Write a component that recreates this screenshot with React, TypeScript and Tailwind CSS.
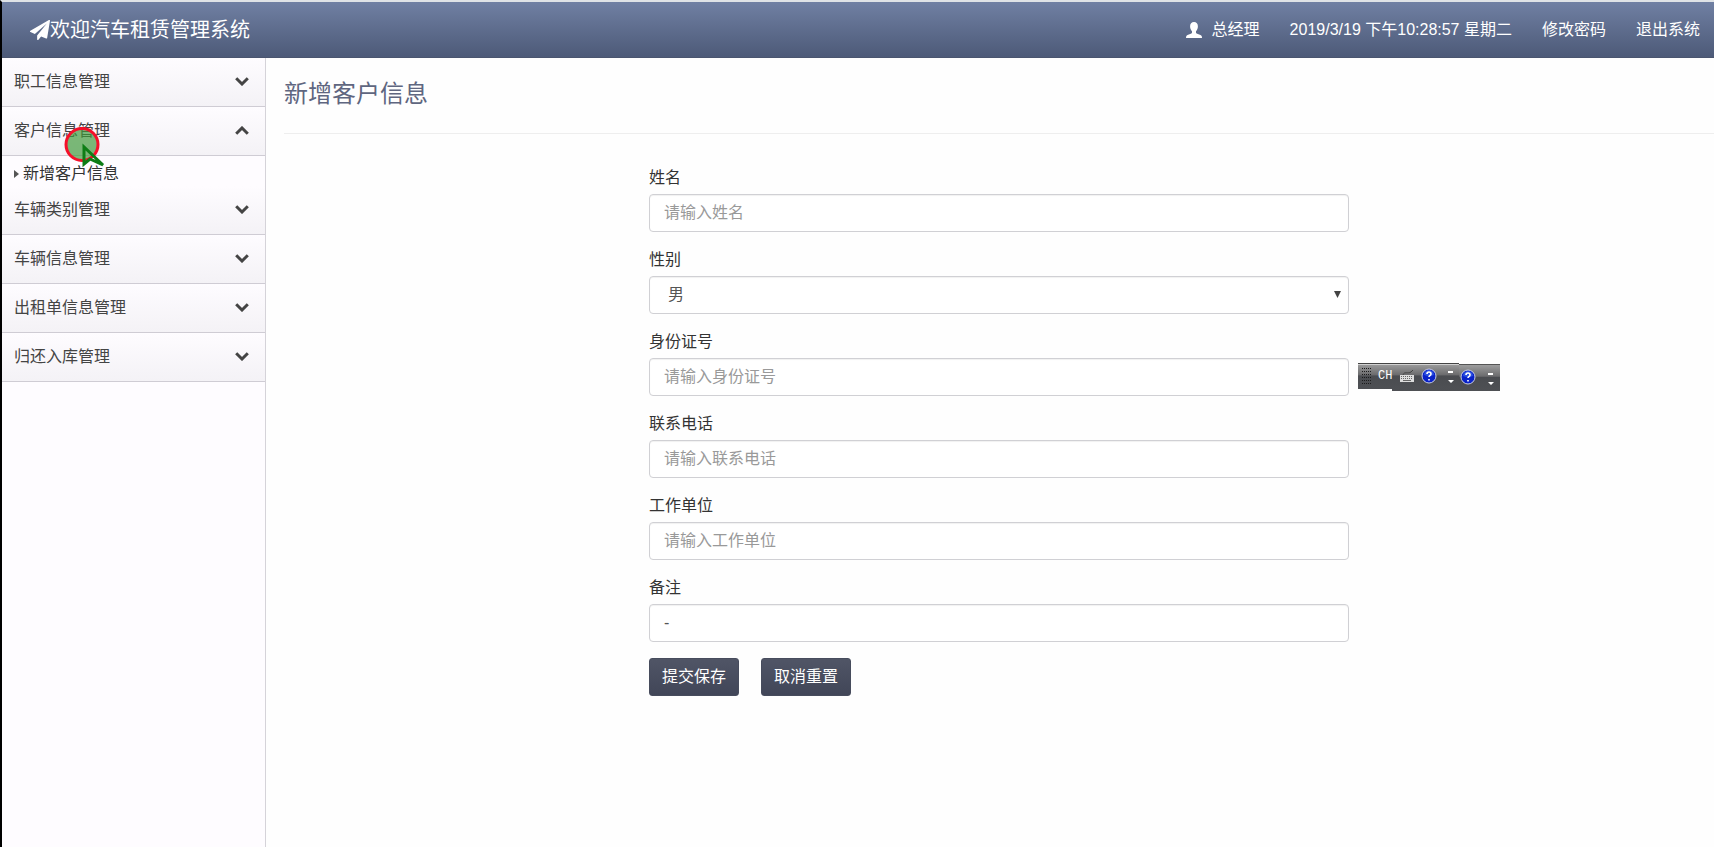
import React from "react";

type MenuItem = { title: string; children?: string[] };

const menu: MenuItem[] = [
  { title: "职工信息管理" },
  { title: "客户信息管理", children: ["新增客户信息"] },
  { title: "车辆类别管理" },
  { title: "车辆信息管理" },
  { title: "出租单信息管理" },
  { title: "归还入库管理" },
];

const controlClass =
  "block h-[38px] w-full rounded border border-[#d0d0d4] bg-white px-3.5 text-base text-[#555] shadow-[inset_0_1px_1px_rgba(0,0,0,0.06)] placeholder:text-[#999] focus:outline-none";
const buttonClass =
  "h-[38px] rounded-[3px] border border-[#474c5d] bg-linear-to-b from-[#505566] to-[#414658] px-3 text-base leading-none text-white";

function PlaneIcon() {
  return (
    <svg viewBox="0 0 1792 1792" className="h-5 w-5 fill-white" aria-hidden="true">
      <path d="M1764 11q33 24 27 64l-256 1536q-5 29-32 45-14 8-31 8-11 0-24-5l-453-185-242 295q-18 23-49 23-13 0-22-4-19-7-30.500-23.500t-11.500-36.500v-349l864-1059-1069 925-395-162q-37-14-40-55-2-40 32-59l1664-960q15-9 32-9 20 0 36 11z" />
    </svg>
  );
}

function UserIcon() {
  return (
    <svg viewBox="0 0 16 16" className="h-4 w-4 fill-white" aria-hidden="true">
      <path d="M8 0C5.500 0 4.100 1.700 4.100 4.200c0 2 .7 3.900 1.900 5v1.300c0 .7-.5 1-1.200 1.300L1.500 13C.5 13.500 0 14.300 0 16h16c0-1.700-.5-2.500-1.500-3L11.200 11.800c-.7-.3-1.200-.6-1.200-1.300V9.200c1.200-1.100 1.900-3 1.900-5C11.900 1.700 10.500 0 8 0z" />
    </svg>
  );
}

function Chevron({ open }: { open: boolean }) {
  return (
    <svg viewBox="0 0 14 9" className="mb-0.5 h-[9px] w-3.5 fill-none stroke-[#444] stroke-3" aria-hidden="true">
      <path d={open ? "M1.200 7.700 7 2l5.800 5.700" : "M1.200 1.300 7 7l5.800-5.700"} />
    </svg>
  );
}

function Field({ id, label, children }: { id: string; label: string; children: React.ReactNode }) {
  return (
    <div className="mb-[15px]">
      <label htmlFor={id} className="mb-1 block text-base leading-[25px] text-[#333]">
        {label}
      </label>
      {children}
    </div>
  );
}

function HelpGlyph({ x, y }: { x: number; y: number }) {
  return (
    <g>
      <circle cx={x} cy={y} r="7" fill="#0a22c8" stroke="#c8cce0" />
      <path d={`M${x - 5} ${y - 1}a5 5 0 0 1 10 0q-5 2-10 0z`} fill="#2c50e2" />
      <path
        d={`M${x - 2} ${y - 2}q0-2 2-2t2 2q0 1-1 1.500t-1 1.500M${x} ${y + 3}v1.500`}
        fill="none"
        stroke="#fff"
        strokeWidth="1.600"
      />
    </g>
  );
}

function LanguageBar() {
  return (
    <div className="absolute left-full top-0 z-10 ml-[9px] h-7 w-[142px]">
      <svg viewBox="0 0 142 28" className="h-7 w-[142px]" aria-hidden="true">
        <defs>
          <linearGradient id="bar" x2="0" y2="1">
            <stop offset="0" stopColor="#a2a2a2" />
            <stop offset="0.450" stopColor="#6c6c6e" />
            <stop offset="0.500" stopColor="#4a4c50" />
            <stop offset="1" stopColor="#4e5054" />
          </linearGradient>
        </defs>
        <path d="M34 1h108v27H34z" fill="url(#bar)" />
        <path d="M34 1.500h108" stroke="#555" />
        <path d="M0 0h101v26H0z" fill="url(#bar)" />
        <path d="M0 .5h101" stroke="#444" />
        <path d="M0 1.500h101" stroke="#d0d0d0" />
        <path
          d="M4 5.500h9M4 8.500h9M4 11.500h9M4 14.500h9M4 17.500h9M4 20.500h9"
          stroke="#1c1c1c"
          strokeDasharray="1 1"
        />
        <path d="M42 12h14v7H42z" fill="#ddd" />
        <path d="M43 13.500h12M43 15.500h12" stroke="#666" strokeDasharray="1 1" />
        <path d="M45 17.500h8" stroke="#666" />
        <path d="M45 12c1-4 5-1 8-3l2-2" fill="none" stroke="#444" />
        <HelpGlyph x={71} y={13} />
        <HelpGlyph x={110} y={14} />
        <path d="M90 8h5v2h-5zM90 17h6l-3 3zM130 10h5v2h-5zM130 19h6l-3 3z" fill="#fff" />
      </svg>
      <span className="absolute left-5 top-1.5 font-['Liberation_Mono',monospace] text-xs leading-[14px] text-white">
        CH
      </span>
    </div>
  );
}

function PointerMark() {
  return (
    <svg
      viewBox="0 0 44 42"
      className="pointer-events-none absolute left-[62px] top-5 z-10 h-[42px] w-11"
      aria-hidden="true"
    >
      <circle cx="18" cy="17.500" r="16" fill="#3e9a3a" fillOpacity="0.680" stroke="#f5102a" strokeWidth="3" />
      <path d="M20 20v17l6-5 13 6z" fill="none" stroke="#0d7d16" strokeWidth="3" />
    </svg>
  );
}

export default function App() {
  return (
    <div className="flex min-h-screen flex-col border-l-2 border-t-2 border-l-black border-t-[#dfe3e6] bg-[#fefefe] font-['Liberation_Sans','Noto_Sans_CJK_SC',sans-serif] text-[#333]">
      <header className="flex h-14 items-center justify-between border-b border-[#4a556f] bg-linear-to-b from-[#7080a3] to-[#4d5a78] pl-7 pr-3.5 text-white">
        <a href="#home" className="flex items-center text-xl leading-7">
          <PlaneIcon />
          欢迎汽车租赁管理系统
        </a>
        <nav className="flex items-center gap-[30px] text-base leading-6">
          <span className="flex items-center gap-2.5">
            <UserIcon />
            总经理
          </span>
          <time>2019/3/19 下午10:28:57 星期二</time>
          <a href="#password">修改密码</a>
          <a href="#logout">退出系统</a>
        </nav>
      </header>
      <div className="flex flex-1">
        <aside className="w-[264px] shrink-0 border-r border-[#d5d3d9] bg-[#fefcff]">
          {menu.map((item) => (
            <div key={item.title} className="relative">
              <button
                type="button"
                aria-expanded={!!item.children}
                className="flex h-[49px] w-full items-center justify-between border-b border-[#cfccd4] bg-linear-to-b from-[#fefcff] to-[#f4f2f6] pl-3 pr-4 text-base text-[#444]"
              >
                {item.title}
                <Chevron open={!!item.children} />
              </button>
              {item.children?.map((child) => (
                <a key={child} href="#new-customer" className="flex h-[30px] items-center gap-1 pl-3 pt-1.5 text-base leading-6 text-[#333]">
                  <svg viewBox="0 0 5 8" className="h-2 w-[5px] fill-[#555]" aria-hidden="true">
                    <path d="M0 0l5 4-5 4z" />
                  </svg>
                  {child}
                </a>
              ))}
              {item.children && <PointerMark />}
            </div>
          ))}
        </aside>
        <main className="min-w-0 flex-1 pl-[18px]">
          <h1 className="border-b border-[#eee] pb-[22px] pt-[18px] text-2xl leading-[35px] text-[#5f6680]">新增客户信息</h1>
          <form className="mx-auto max-w-[700px] pt-[31px]" onSubmit={(e) => e.preventDefault()}>
            <Field id="name" label="姓名">
              <input id="name" className={controlClass} placeholder="请输入姓名" />
            </Field>
            <Field id="gender" label="性别">
              <div className="relative">
                <select id="gender" className={`${controlClass} appearance-none pl-[18px]`}>
                  <option>男</option>
                  <option>女</option>
                </select>
                <svg viewBox="0 0 7 7" className="pointer-events-none absolute right-2 top-[15px] h-[7px] w-[7px] fill-[#444]" aria-hidden="true">
                  <path d="M0 0h7L3.500 7z" />
                </svg>
              </div>
            </Field>
            <Field id="idcard" label="身份证号">
              <div className="relative">
                <input id="idcard" className={controlClass} placeholder="请输入身份证号" />
                <div className="absolute right-0 top-[5px]">
                  <LanguageBar />
                </div>
              </div>
            </Field>
            <Field id="phone" label="联系电话">
              <input id="phone" className={controlClass} placeholder="请输入联系电话" />
            </Field>
            <Field id="company" label="工作单位">
              <input id="company" className={controlClass} placeholder="请输入工作单位" />
            </Field>
            <Field id="remark" label="备注">
              <input id="remark" className={controlClass} defaultValue="-" />
            </Field>
            <div className="flex gap-[22px] pt-px">
              <button type="submit" className={buttonClass}>提交保存</button>
              <button type="reset" className={buttonClass}>取消重置</button>
            </div>
          </form>
        </main>
      </div>
    </div>
  );
}
